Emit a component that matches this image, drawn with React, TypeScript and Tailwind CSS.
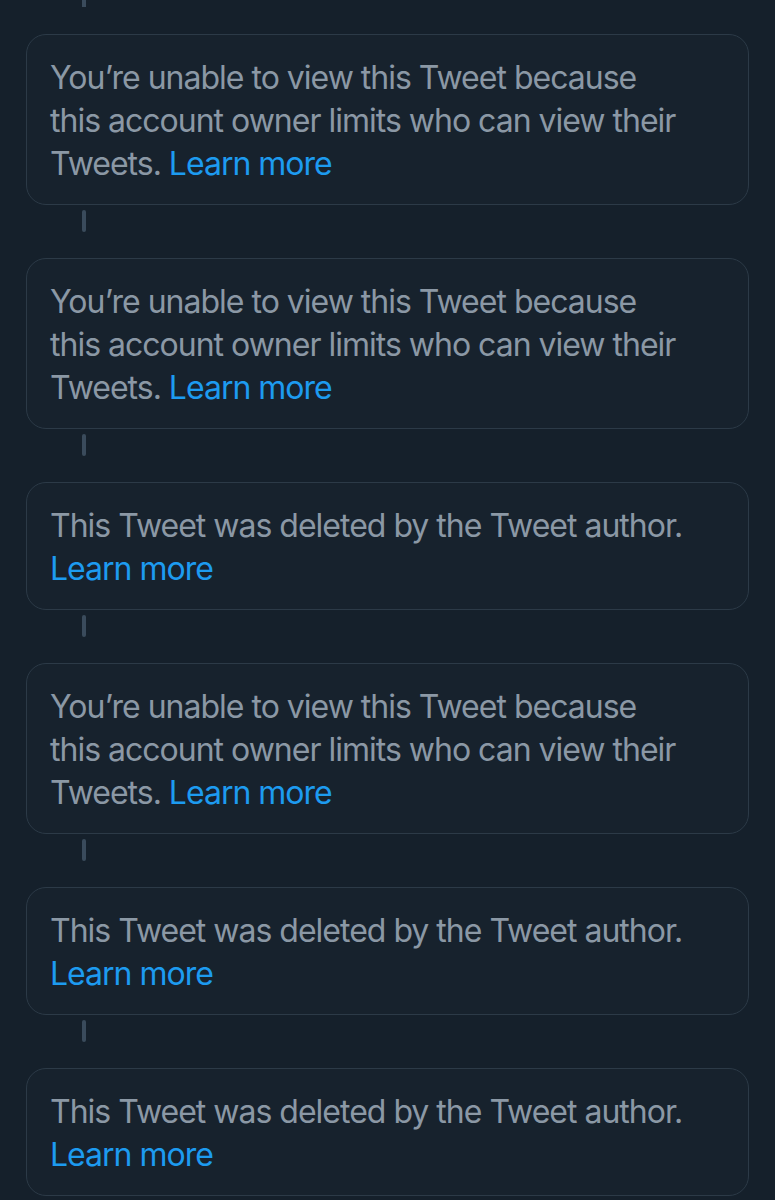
const items = [
  { kind: "limited" },
  { kind: "limited" },
  { kind: "deleted" },
  { kind: "limited" },
  { kind: "deleted" },
  { kind: "deleted" },
]

function Connector({ last }: { last?: boolean }) {
  return (
    <div className="h-[53px] pt-[5px] pl-[56px]">
      {!last && <div className="h-[22px] w-[4px] rounded-sm bg-[#3a4b5c]" />}
    </div>
  )
}

function Notice({ kind }: { kind: string }) {
  return (
    <div className="rounded-[20px] border border-[#2c3a47] bg-[#17222d] px-[23px] pt-[21px] pb-[19px] text-[32px] leading-[43px] text-[#8b98a5]">
      {kind === "limited" ? (
        <p className="tracking-[-1px] whitespace-nowrap">
          You’re unable to view this Tweet because
          <br />
          this account owner limits who can view their
          <br />
          Tweets. <span className="text-[#1d9bf0]">Learn more</span>
        </p>
      ) : (
        <p className="tracking-[-1px] whitespace-nowrap">
          This Tweet was deleted by the Tweet author.
          <br />
          <span className="text-[#1d9bf0]">Learn more</span>
        </p>
      )}
    </div>
  )
}

export default function App() {
  return (
    <div className="min-h-[1200px] bg-[#15202b] px-[26px] font-['Inter','Liberation_Sans',sans-serif] antialiased">
      <div className="h-[34px] pl-[56px]">
        <div className="h-[7px] w-[4px] bg-[#3a4b5c]" />
      </div>
      {items.map((item, i) => (
        <div key={i}>
          <Notice kind={item.kind} />
          <Connector last={i === items.length - 1} />
        </div>
      ))}
    </div>
  )
}
